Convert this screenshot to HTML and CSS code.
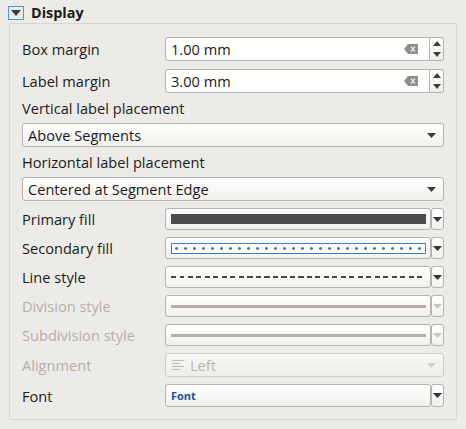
FILE: index.html
```html
<!DOCTYPE html>
<html>
<head>
<meta charset="utf-8">
<link rel="stylesheet" href="styles.css">
</head>
<body>
<div class="header">
  <span class="collapse"><svg width="10" height="6" viewBox="0 0 10 6"><path d="M0 0 H10 L5 6 Z" fill="#3a3a3a"/></svg></span>
  <span class="title">Display</span>
</div>
<div class="group">
  <div class="row r-spin">
    <span class="lbl">Box margin</span>
    <div class="field spin">
      <div class="input"><span>1.00 mm</span><svg class="clear" width="14" height="10" viewBox="0 0 14 10"><path d="M4 0 H14 V10 H4 L0 5 Z" fill="#8e8e8e"/><path d="M7 2.5 L11 7.5 M11 2.5 L7 7.5" stroke="#e8e8e8" stroke-width="1.3"/></svg></div>
      <div class="spinner"><svg width="8" height="18" viewBox="0 0 8 18"><path d="M0 6 L4 1 L8 6 Z M0 12 L8 12 L4 17 Z" fill="#3c3c3c"/></svg></div>
    </div>
  </div>
  <div class="row r-spin r2">
    <span class="lbl">Label margin</span>
    <div class="field spin">
      <div class="input"><span>3.00 mm</span><svg class="clear" width="14" height="10" viewBox="0 0 14 10"><path d="M4 0 H14 V10 H4 L0 5 Z" fill="#8e8e8e"/><path d="M7 2.5 L11 7.5 M11 2.5 L7 7.5" stroke="#e8e8e8" stroke-width="1.3"/></svg></div>
      <div class="spinner"><svg width="8" height="18" viewBox="0 0 8 18"><path d="M0 6 L4 1 L8 6 Z M0 12 L8 12 L4 17 Z" fill="#3c3c3c"/></svg></div>
    </div>
  </div>
  <div class="caption">Vertical label placement</div>
  <div class="combo wide"><span>Above Segments</span><svg width="9" height="5" viewBox="0 0 9 5"><path d="M0 0 H9 L4.5 5 Z" fill="#3c3c3c"/></svg></div>
  <div class="caption">Horizontal label placement</div>
  <div class="combo wide"><span>Centered at Segment Edge</span><svg width="9" height="5" viewBox="0 0 9 5"><path d="M0 0 H9 L4.5 5 Z" fill="#3c3c3c"/></svg></div>

  <div class="row r-btn first">
    <span class="lbl">Primary fill</span>
    <div class="field"><div class="btn"><div class="solid"></div></div><div class="arrow"><svg width="9" height="5" viewBox="0 0 9 5"><path d="M0 0 H9 L4.5 5 Z" fill="#333"/></svg></div></div>
  </div>
  <div class="row r-btn">
    <span class="lbl">Secondary fill</span>
    <div class="field"><div class="btn"><div class="dotted"></div></div><div class="arrow"><svg width="9" height="5" viewBox="0 0 9 5"><path d="M0 0 H9 L4.5 5 Z" fill="#333"/></svg></div></div>
  </div>
  <div class="row r-btn">
    <span class="lbl">Line style</span>
    <div class="field"><div class="btn"><div class="dashed"></div></div><div class="arrow"><svg width="9" height="5" viewBox="0 0 9 5"><path d="M0 0 H9 L4.5 5 Z" fill="#333"/></svg></div></div>
  </div>
  <div class="row r-btn dis">
    <span class="lbl">Division style</span>
    <div class="field"><div class="btn"><div class="gline"></div></div><div class="arrow"><svg width="9" height="5" viewBox="0 0 9 5"><path d="M0 0 H9 L4.5 5 Z" fill="#c9c6c2"/></svg></div></div>
  </div>
  <div class="row r-btn dis">
    <span class="lbl">Subdivision style</span>
    <div class="field"><div class="btn"><div class="gline"></div></div><div class="arrow"><svg width="9" height="5" viewBox="0 0 9 5"><path d="M0 0 H9 L4.5 5 Z" fill="#c9c6c2"/></svg></div></div>
  </div>
  <div class="row r-align dis">
    <span class="lbl">Alignment</span>
    <div class="field"><div class="combo dcombo"><span class="alval"><svg width="12" height="10" viewBox="0 0 12 10"><path d="M0 0.5 H12 M0 3.5 H8 M0 6.5 H12 M0 9.5 H8" stroke="#bdbab5" stroke-width="1"/></svg>Left</span><svg width="9" height="5" viewBox="0 0 9 5"><path d="M0 0 H9 L4.5 5 Z" fill="#d2cfcb"/></svg></div></div>
  </div>
  <div class="row r-font">
    <span class="lbl">Font</span>
    <div class="field"><div class="btn fontbtn"><span>Font</span></div><div class="arrow"><svg width="9" height="5" viewBox="0 0 9 5"><path d="M0 0 H9 L4.5 5 Z" fill="#333"/></svg></div></div>
  </div>
</div>
</body>
</html>
```
FILE: styles.css
```css
html, body {
  margin: 0;
  padding: 0;
  background: #edebe8;
  font-family: "Open Sans", "DejaVu Sans", sans-serif;
  font-size: 14.6px;
  color: #1b1b1b;
  width: 466px;
  height: 429px;
  overflow: hidden;
}

.header {
  height: 23px;
  display: flex;
  align-items: center;
  padding-left: 8px;
  box-sizing: border-box;
  padding-top: 2px;
}

.collapse {
  width: 16px;
  height: 14px;
  box-sizing: border-box;
  border: 1px solid #4f93d6;
  display: flex;
  align-items: center;
  justify-content: center;
}

.title {
  font-weight: bold;
  margin-left: 7px;
  font-size: 14.4px;
}

.group {
  margin-left: 9px;
  width: 448px;
  height: 397px;
  box-sizing: border-box;
  border: 1px solid #d8d5d0;
  border-radius: 2px;
  padding: 13px 12px 0 12px;
  display: flex;
  flex-direction: column;
}

.row {
  display: flex;
  align-items: center;
}

.lbl {
  width: 143px;
  flex: none;
}

.dis .lbl {
  color: #b3b0ab;
}

.field {
  display: flex;
  flex: 1;
  height: 100%;
}

.r-spin { height: 24px; }
.r2 { margin-top: 8px; }

.input {
  flex: 1;
  background: #ffffff;
  border: 1px solid #b7b3ae;
  border-radius: 3px 0 0 3px;
  display: flex;
  align-items: center;
  justify-content: space-between;
  padding: 0 11px 0 5px;
}

.clear { flex: none; }

.spinner {
  width: 14px;
  box-sizing: border-box;
  border: 1px solid #b7b3ae;
  border-left: none;
  border-radius: 0 3px 3px 0;
  background: linear-gradient(#ffffff, #f1efec);
  display: flex;
  align-items: center;
  justify-content: center;
}

.caption {
  height: 30px;
  display: flex;
  align-items: center;
}

.combo {
  height: 24px;
  box-sizing: border-box;
  border: 1px solid #b7b3ae;
  border-radius: 3px;
  background: linear-gradient(#ffffff, #f2f0ed);
  display: flex;
  align-items: center;
  justify-content: space-between;
  padding: 0 7px 0 5px;
}

.r-btn { height: 22px; margin-top: 7px; }
.r-btn.first { margin-top: 7px; }

.btn {
  flex: 1;
  box-sizing: border-box;
  border: 1px solid #b7b3ae;
  border-radius: 3px;
  background: linear-gradient(#ffffff, #f2f0ed);
  display: flex;
  align-items: center;
  padding: 0 4px 0 5px;
}

.arrow {
  width: 13px;
  box-sizing: border-box;
  border: 1px solid #b7b3ae;
  border-radius: 3px;
  background: linear-gradient(#ffffff, #f2f0ed);
  display: flex;
  align-items: center;
  justify-content: center;
}

.solid {
  flex: 1;
  height: 10px;
  background: #4d4d4d;
}

.dotted {
  flex: 1;
  height: 11px;
  box-sizing: border-box;
  border: 1px solid #3d7fc4;
  background:
    radial-gradient(circle, #3b7cc4 1.2px, transparent 1.6px) 0 0 / 9px 9px repeat-x,
    #ffffff;
  background-position: 0 0;
}

.dashed {
  flex: 1;
  height: 2px;
  background: repeating-linear-gradient(90deg, #4a4a4a 0 5px, transparent 5px 8.5px);
}

.gline {
  flex: 1;
  height: 3px;
  background: #b1aeab;
}

.r-align { height: 24px; margin-top: 7px; }
.dcombo { flex: 1; height: 24px; background: linear-gradient(#f8f7f5, #efedea); border-color: #cfccc8; }
.alval { display: flex; align-items: center; gap: 6px; color: #b8b5b0; padding-left: 1px; }

.r-font { height: 23px; margin-top: 7px; }
.fontbtn span {
  color: #1d4ea8;
  font-weight: bold;
  font-size: 11px;
}
```
